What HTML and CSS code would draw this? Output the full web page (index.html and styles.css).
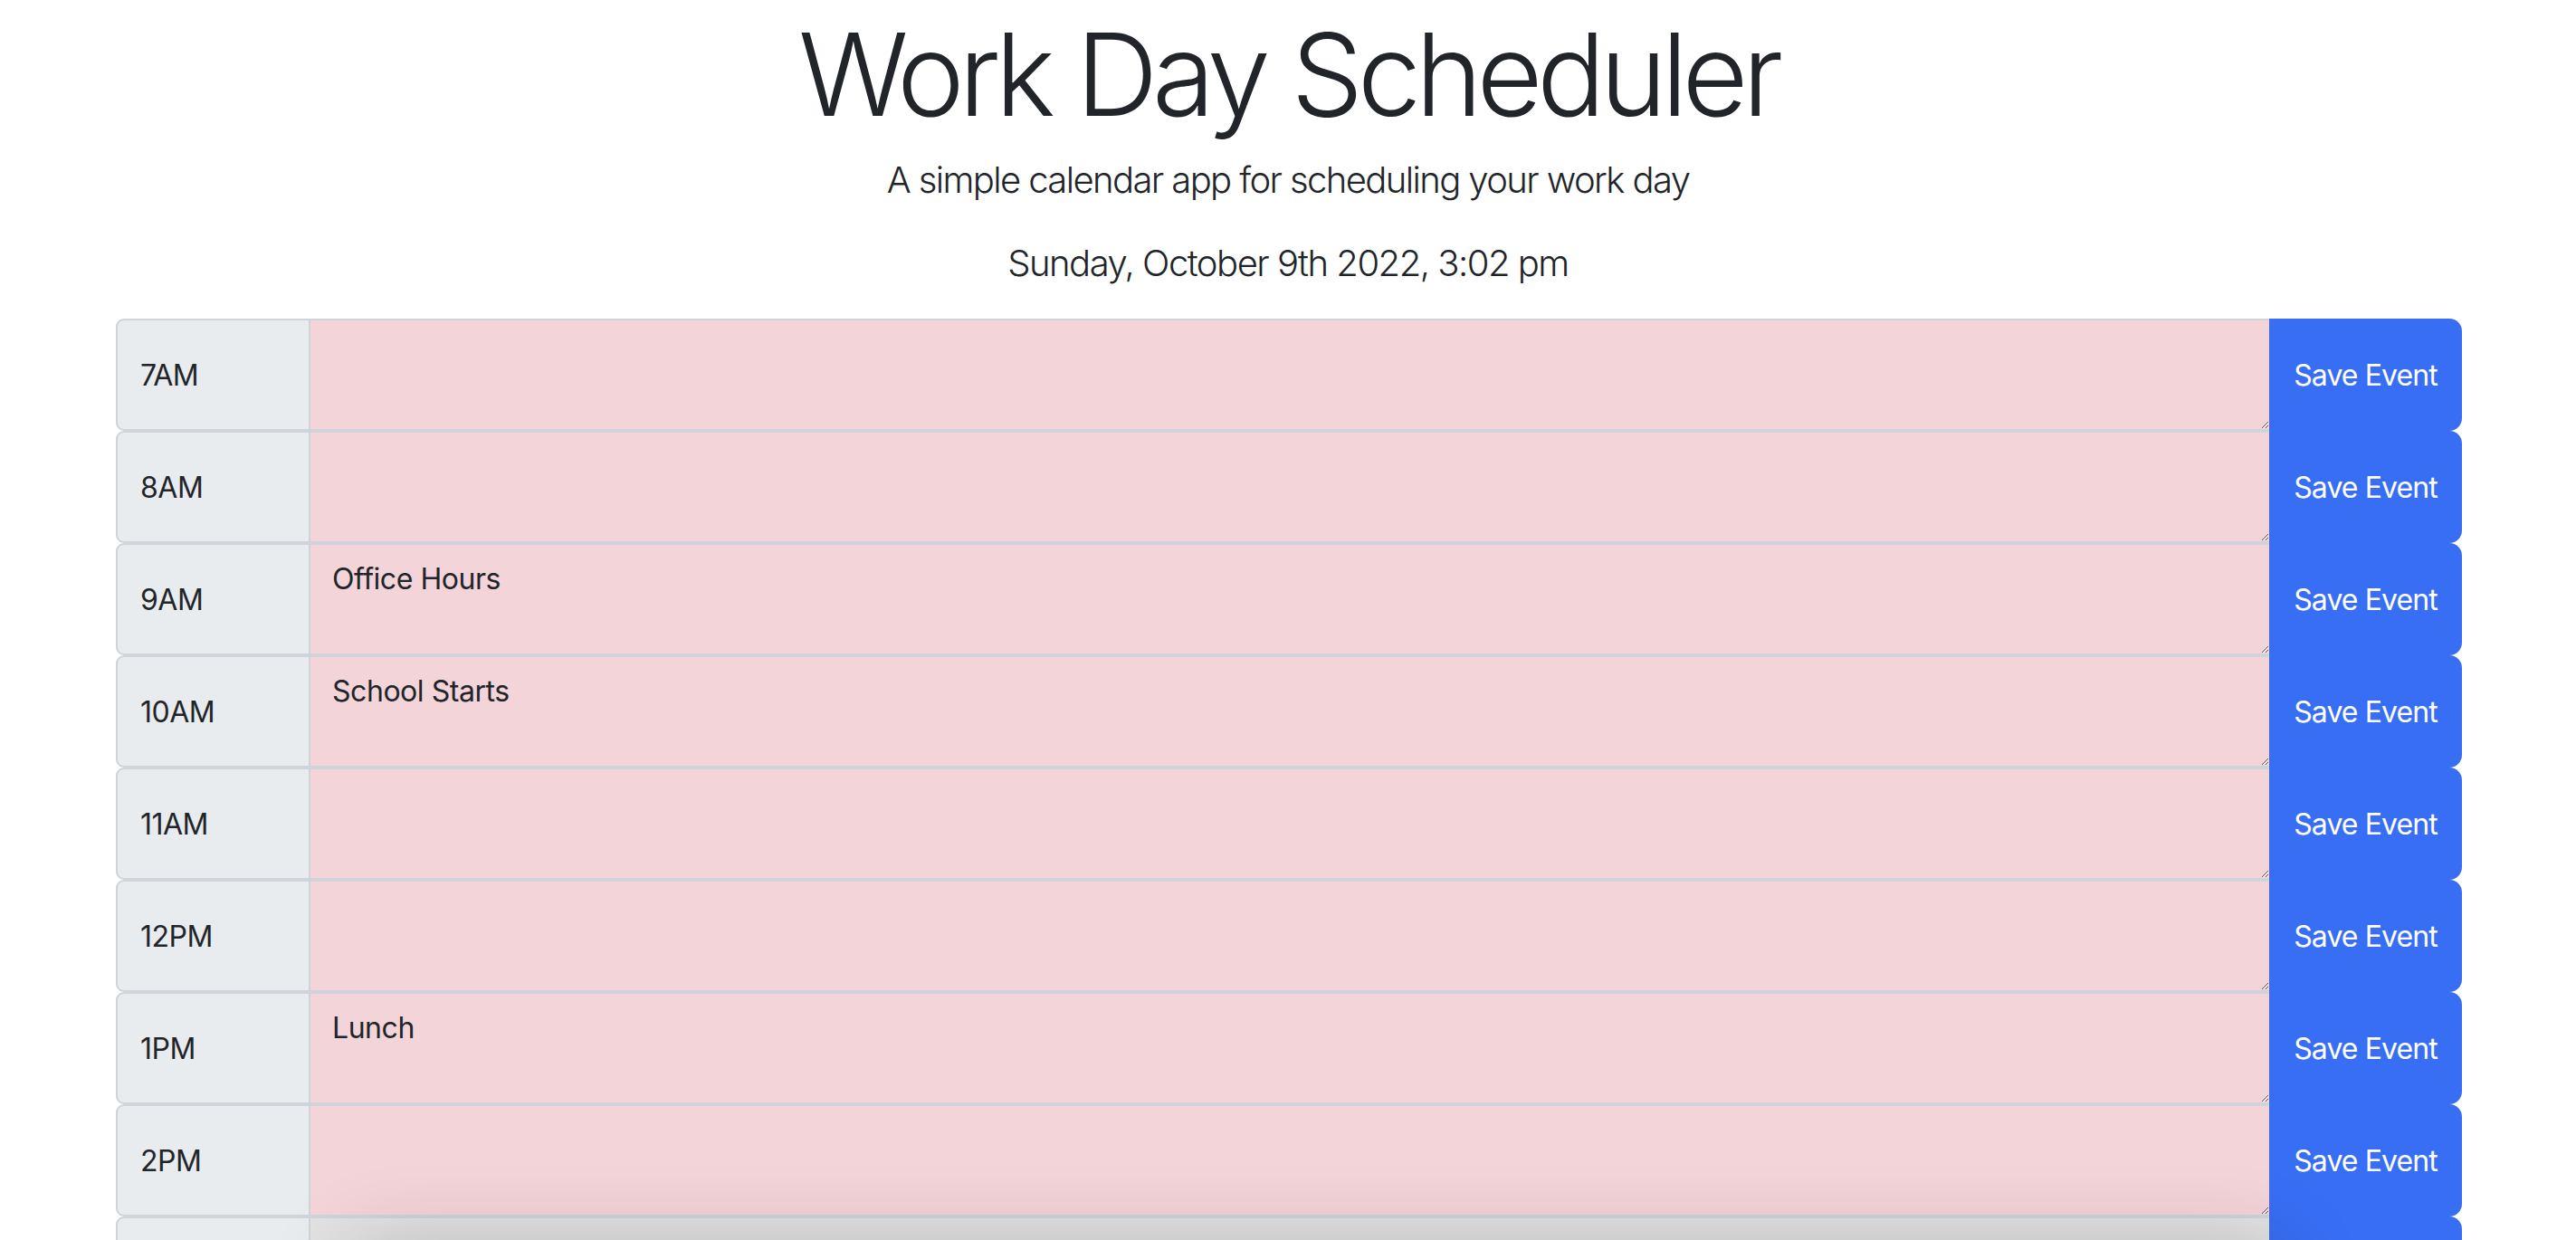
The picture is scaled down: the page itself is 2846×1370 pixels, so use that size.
FILE: index.html
```html
<!DOCTYPE html>
<html lang="en">
<head>
<meta charset="utf-8">
<title>Work Day Scheduler</title>
<link rel="stylesheet" href="styles.css">
</head>
<body>
<header class="jumbotron">
  <h1 class="display">Work Day Scheduler</h1>
  <p class="lead">A simple calendar app for scheduling your work day</p>
  <p class="lead current-day">Sunday, October 9th 2022, 3:02 pm</p>
</header>
<main class="container">
  <div class="time-block"><div class="hour">7AM</div><textarea class="description past"></textarea><button class="save-btn">Save Event</button></div>
  <div class="time-block"><div class="hour">8AM</div><textarea class="description past"></textarea><button class="save-btn">Save Event</button></div>
  <div class="time-block"><div class="hour">9AM</div><textarea class="description past">Office Hours</textarea><button class="save-btn">Save Event</button></div>
  <div class="time-block"><div class="hour">10AM</div><textarea class="description past">School Starts</textarea><button class="save-btn">Save Event</button></div>
  <div class="time-block"><div class="hour">11AM</div><textarea class="description past"></textarea><button class="save-btn">Save Event</button></div>
  <div class="time-block"><div class="hour">12PM</div><textarea class="description past"></textarea><button class="save-btn">Save Event</button></div>
  <div class="time-block"><div class="hour">1PM</div><textarea class="description past">Lunch</textarea><button class="save-btn">Save Event</button></div>
  <div class="time-block"><div class="hour">2PM</div><textarea class="description past"></textarea><button class="save-btn">Save Event</button></div>
  <div class="time-block"><div class="hour">3PM</div><textarea class="description present"></textarea><button class="save-btn">Save Event</button></div>
  <div class="time-block"><div class="hour">4PM</div><textarea class="description future"></textarea><button class="save-btn">Save Event</button></div>
  <div class="time-block"><div class="hour">5PM</div><textarea class="description future"></textarea><button class="save-btn">Save Event</button></div>
</main>
<div class="bottom-shade"></div>
</body>
</html>
```
FILE: styles.css
```css
html, body {
  margin: 0;
  padding: 0;
  background: #ffffff;
  color: #212529;
  font-family: Inter, "Noto Sans", "Liberation Sans", sans-serif;
  overflow: hidden;
}

.jumbotron {
  display: flex;
  flex-direction: column;
  align-items: center;
}

.display {
  margin: 7px 0 0;
  font-size: 126px;
  font-weight: 300;
  line-height: 1.2;
  letter-spacing: -6.4px;
}

.lead {
  margin: 0;
  font-size: 40px;
  font-weight: 300;
  line-height: 1.5;
  letter-spacing: -1.6px;
}

.lead:first-of-type {
  margin-top: 11px;
}

.current-day {
  margin-top: 32px;
  margin-bottom: 31px;
  letter-spacing: -1.5px;
}

.container {
  width: 2592px;
  margin: 0 auto;
  padding-left: 2px;
  display: flex;
  flex-direction: column;
}

.time-block {
  display: grid;
  grid-template-columns: 215px 1fr 213px;
  height: 124px;
}

.hour {
  display: flex;
  align-items: center;
  padding-left: 25px;
  background: #e9ecef;
  border: 2px solid #ced4da;
  border-radius: 9px 0 0 9px;
  font-size: 32px;
  letter-spacing: -0.5px;
}

.description {
  margin: 0;
  padding: 14px 24px 12px;
  border: 2px solid #ced4da;
  border-left: 0;
  border-right: 0;
  border-radius: 0;
  font-family: Inter, "Noto Sans", "Liberation Sans", sans-serif;
  font-size: 32px;
  line-height: 1.5;
  letter-spacing: -0.45px;
  color: #212529;
  outline: none;
}

.past {
  background: #f3d4d9;
}

.present {
  background: #e2e2e2;
}

.future {
  background: #e2e2e2;
}

.save-btn {
  border: 0;
  margin: 0;
  padding: 0;
  background: #386ef4;
  color: #ffffff;
  border-radius: 0 14px 14px 0;
  font-family: Inter, "Noto Sans", "Liberation Sans", sans-serif;
  font-size: 32px;
  letter-spacing: -0.9px;
}

.bottom-shade {
  position: absolute;
  left: 430px;
  top: 1420px;
  width: 2050px;
  height: 200px;
  box-shadow: 0 0 90px 40px rgba(0, 0, 0, 0.2);
  pointer-events: none;
}
```
